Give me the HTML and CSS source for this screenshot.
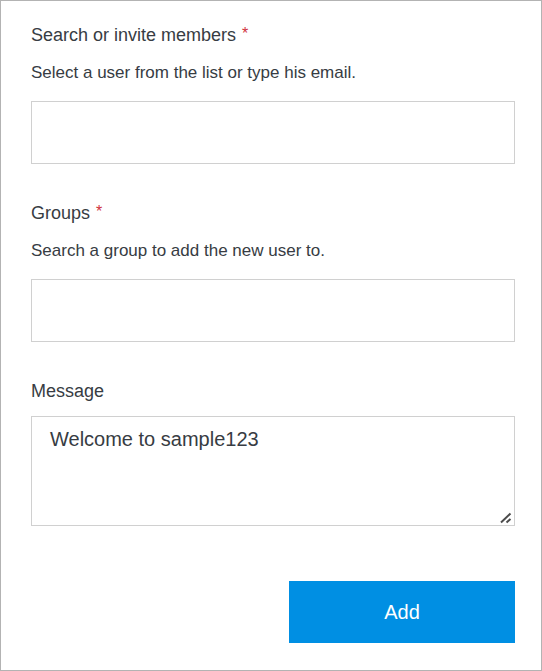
FILE: index.html
```html
<!DOCTYPE html>
<html lang="en">
<head>
<meta charset="utf-8">
<meta name="viewport" content="width=device-width, initial-scale=1">
<title>Add member</title>
<link rel="stylesheet" href="styles.css">
</head>
<body>
<form class="panel">
  <div class="field">
    <label class="label" for="members">Search or invite members <span class="required">*</span></label>
    <p class="help" id="members-help">Select a user from the list or type his email.</p>
    <input class="control" id="members" type="text" aria-describedby="members-help" required>
  </div>
  <div class="field">
    <label class="label" for="groups">Groups <span class="required">*</span></label>
    <p class="help" id="groups-help">Search a group to add the new user to.</p>
    <input class="control" id="groups" type="text" aria-describedby="groups-help" required>
  </div>
  <div class="field">
    <label class="label" for="message">Message</label>
    <div class="message-box">
      <textarea class="control message" id="message">Welcome to sample123</textarea>
      <svg class="grip" width="12" height="12" viewBox="0 0 12 12" aria-hidden="true">
        <path d="M1 10.500 10.500 1.500M6.500 10.500 10.500 7" />
      </svg>
    </div>
  </div>
  <button class="submit" type="submit">Add</button>
</form>
</body>
</html>
```
FILE: styles.css
```css
* {
  box-sizing: border-box;
}

body {
  margin: 0;
  background: #fff;
  color: #373c43;
  font-family: "Liberation Sans", Arial, sans-serif;
}

.panel {
  display: flex;
  flex-direction: column;
  min-height: 100vh;
  padding: 22px 26px 27px 30px;
  border: 1px solid #b3b3b3;
}

.field {
  display: flex;
  flex-direction: column;
  margin-bottom: 37px;
}

.label {
  font-size: 18px;
  line-height: 24px;
  margin-bottom: 13px;
}

.required {
  margin-left: 1px;
  color: #d0343c;
  font-size: 16px;
  line-height: 21px;
  vertical-align: top;
}

.help {
  margin: 0 0 16px;
  font-size: 17px;
  line-height: 25px;
}

.control {
  display: block;
  width: 100%;
  height: 63px;
  padding: 8px 18px;
  border: 1px solid #d0d0d0;
  border-radius: 0;
  background: #fff;
  color: inherit;
  font: 20px/28px "Liberation Sans", Arial, sans-serif;
}

.message-box {
  position: relative;
}

.message {
  height: 110px;
  resize: none;
}

.grip {
  position: absolute;
  right: 3px;
  bottom: 2px;
  fill: none;
  stroke: #4c4c4c;
  stroke-width: 2;
}

.submit {
  align-self: flex-end;
  width: 226px;
  max-width: 100%;
  height: 62px;
  margin-top: 18px;
  border: 0;
  background: #008fe3;
  color: #fff;
  font: 20px/28px "Liberation Sans", Arial, sans-serif;
}
```
